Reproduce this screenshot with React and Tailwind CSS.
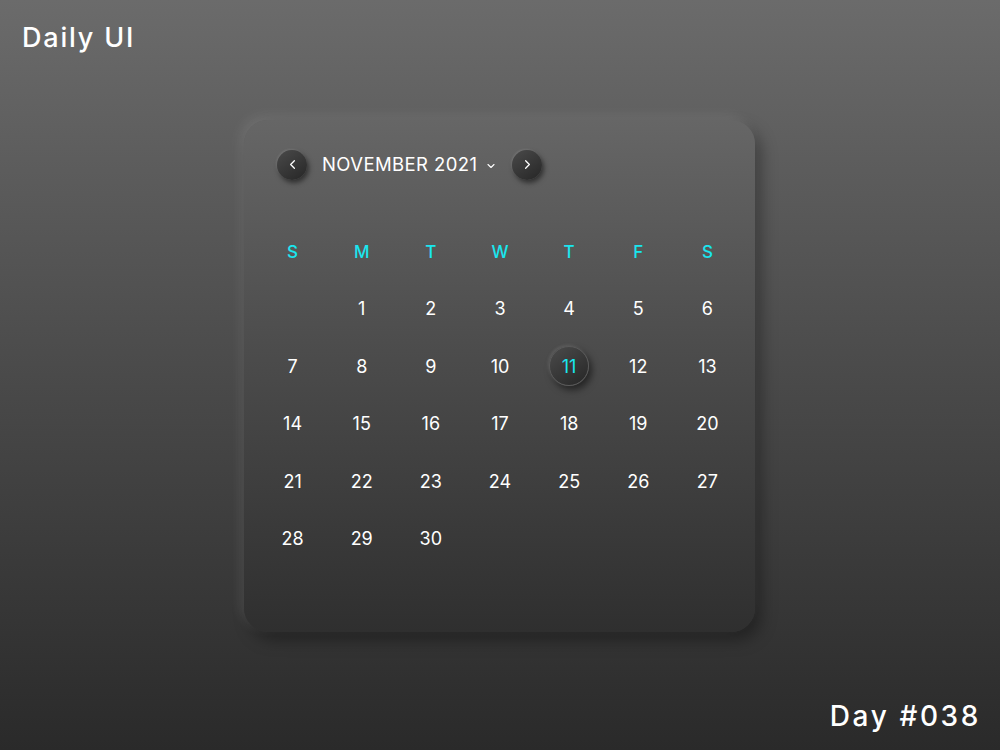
import { ChevronLeft, ChevronRight, ChevronDown } from 'lucide-react';

const weekdays = ['S', 'M', 'T', 'W', 'T', 'F', 'S'];

// November 2021 starts on Monday
const days = [null, ...Array.from({ length: 30 }, (_, i) => i + 1)];

function RoundButton({ children }) {
  return (
    <button className="w-[30px] h-[30px] rounded-full flex items-center justify-center text-white bg-[linear-gradient(145deg,#4a4a4a,#262626)] shadow-[2px_3px_5px_rgba(0,0,0,0.5),-1px_-1px_2px_rgba(255,255,255,0.12)]">
      {children}
    </button>
  );
}

export default function App() {
  const selected = 11;

  return (
    <div className="w-[1000px] h-[750px] relative overflow-hidden bg-[linear-gradient(180deg,#6b6b6b_0%,#4a4a4a_50%,#2a2a2a_100%)] font-['Inter','Liberation_Sans',sans-serif] text-white">
      <div className="absolute left-[22px] top-[18px] text-[27px] font-medium tracking-[1.8px]">Daily UI</div>
      <div className="absolute right-[19px] bottom-[13px] text-[28px] font-medium tracking-[2.6px]">Day #038</div>

      <div className="pt-[120px] flex justify-center">
        <div className="w-[511px] h-[512px] ml-[-1px] rounded-[24px] pl-[14px] pr-[13px] bg-[linear-gradient(180deg,#666666_0%,#4c4c4c_45%,#2f2f2f_100%)] shadow-[-4px_-4px_12px_rgba(255,255,255,0.1),6px_8px_16px_rgba(0,0,0,0.35)]">
          <div className="flex items-center h-[86px] pt-[3px] pl-[19px]">
            <RoundButton>
              <ChevronLeft size={15} strokeWidth={2} />
            </RoundButton>
            <div className="ml-[15px] text-[18.5px] font-normal tracking-[0.4px]">NOVEMBER 2021</div>
            <ChevronDown size={12} strokeWidth={2.2} className="ml-[8px] mt-[2px]" />
            <div className="ml-[15px]">
              <RoundButton>
                <ChevronRight size={15} strokeWidth={2} />
              </RoundButton>
            </div>
          </div>

          <div className="grid grid-cols-7 mt-[32px]">
            {weekdays.map((d, i) => (
              <div key={i} className="h-[30px] flex items-center justify-center text-[17px] font-medium text-[#19e6ef]">
                {d}
              </div>
            ))}
          </div>

          <div className="grid grid-cols-7 mt-[12px]">
            {days.map((d, i) => (
              <div key={i} className="h-[57.5px] flex items-center justify-center">
                {d === selected ? (
                  <div className="w-[40px] h-[40px] rounded-full flex items-center justify-center text-[18px] font-normal text-[#19e6ef] bg-[linear-gradient(145deg,#4b4b4b,#262626)] shadow-[3px_4px_7px_rgba(0,0,0,0.5),-1px_-1px_3px_rgba(255,255,255,0.12)] border border-[#5a5a5a]">
                    {d}
                  </div>
                ) : (
                  <span className="text-[18px] font-normal">{d}</span>
                )}
              </div>
            ))}
          </div>
        </div>
      </div>
    </div>
  );
}
